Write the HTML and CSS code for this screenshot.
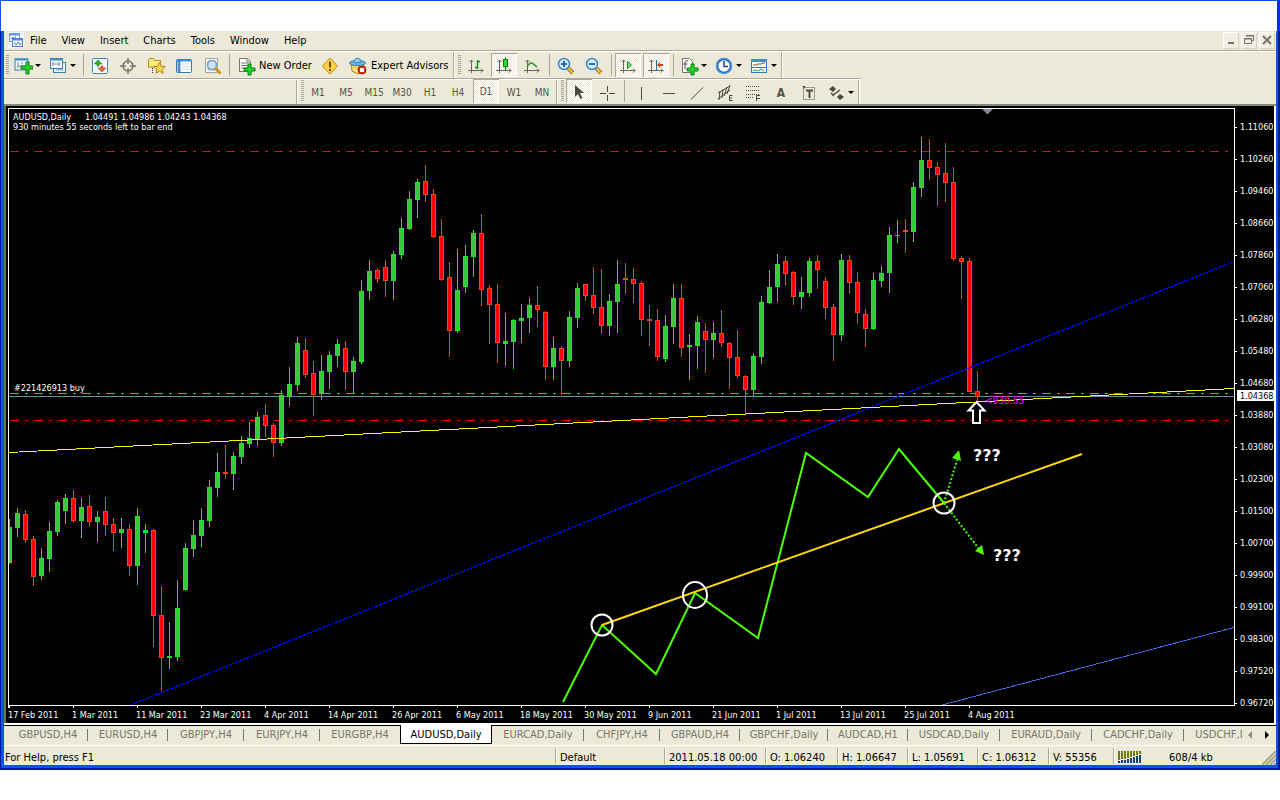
FILE: index.html
```html
<!DOCTYPE html>
<html lang="en">
<head>
<meta charset="utf-8">
<title>AUDUSD,Daily</title>
<link rel="stylesheet" href="styles.css">
</head>
<body>
<div class="caption"></div>
<div class="frame">
<div class="window">
  <nav class="menubar">
    <svg class="app-icon" width="16" height="16" viewBox="0 0 16 16"><rect width="16" height="16" fill="#f4f8ff"/><rect x="1.500" y="1.500" width="10" height="8" fill="#fff" stroke="#6a9ae8"/><path d="M1 2.500h11" stroke="#6a9ae8" stroke-width="2"/><path d="M3 7l2-2 1 2 2-3" fill="none" stroke="#4c84e0"/><rect x="4.500" y="6.500" width="10" height="8" fill="#fff" stroke="#4c84e0"/><path d="M4 7.500h11" stroke="#4c84e0" stroke-width="2"/><path d="M6 10l2 3 2-3 2 3 1-2" fill="none" stroke="#4c84e0"/></svg>
    <button>File</button><button>View</button><button>Insert</button><button>Charts</button><button>Tools</button><button>Window</button><button>Help</button>
    <div class="controls">
      <button aria-label="Minimize"><svg width="16" height="16"><path d="M5 11h6" stroke="#77756a" stroke-width="2"/></svg></button>
      <button aria-label="Restore"><svg width="16" height="16" fill="none" stroke="#77756a"><path d="M5.500 5V3.500h7v5H11M5 4h8"/><path d="M3.500 6.500h7v5h-7zM3 7h8"/></svg></button>
      <button aria-label="Close"><svg width="16" height="16"><path d="M4 4l8 8M12 4l-8 8" stroke="#77756a" stroke-width="2"/></svg></button>
    </div>
  </nav>

  <div class="toolbar main">
    <span class="grip"></span>
    <button class="drop" aria-label="New chart"><svg width="20" height="20"><rect x="2" y="3" width="13" height="11" fill="#eef5fb" stroke="#3f7dad" stroke-width="1"/><path d="M2 3.500h13" stroke="#3f8fd0" stroke-width="2"/><path d="M5 6v6M4 10h8M9 6v2" stroke="#7996b0"/><path d="M13 6h3v4h4v3h-4v5h-3v-5H8v-3h5z" fill="#23d62b" stroke="#087d12"/></svg></button>
    <button class="drop" aria-label="Profiles"><svg width="20" height="20"><rect x="5.500" y="6.500" width="12" height="10" fill="#eef5fb" stroke="#3f7dad"/><rect x="2.500" y="2.500" width="12" height="10" fill="#eef5fb" stroke="#3f7dad"/><path d="M2 3.500h13" stroke="#3f8fd0" stroke-width="2"/><path d="M5 6v4M4 8h8M11 6v4M8 14h7" stroke="#7996b0"/></svg></button>
    <span class="sep"></span>
    <button aria-label="Market Watch"><svg width="20" height="20"><rect x="2.500" y="2.500" width="15" height="15" rx="1" fill="#fff" stroke="#3d82b8"/><path d="M5 5h10M5 8h10M5 11h10M5 14h10" stroke="#d2dde8"/><path d="M8 4l4 4H9v2H7V8H4z" fill="#27b52b" stroke="#117418" stroke-width=".5"/><path d="M12 16l4-4h-3v-2h-2v2H8z" fill="#ef6235" stroke="#b53510" stroke-width=".5"/></svg></button>
    <button aria-label="Data Window"><svg width="20" height="20" fill="none" stroke="#77736c" stroke-width="1.500"><circle cx="10" cy="10" r="5"/><path d="M10 2v6M10 12v6M2 10h6M12 10h6"/></svg></button>
    <button aria-label="Navigator"><svg width="20" height="20"><path d="M2.500 11V3.500l1-1h4l1 2h6V11z" fill="#ffe97a" stroke="#b08b1e"/><path d="M6.500 12v6" stroke="#333" stroke-dasharray="1 1"/><path d="M13.500 6.500l1.700 3.700 4 .4-3 2.700.9 4-3.600-2.100-3.600 2.100.9-4-3-2.700 4-.4z" fill="#ffd54b" stroke="#b98212"/></svg></button>
    <button aria-label="Terminal"><svg width="20" height="20"><rect x="2.500" y="3.500" width="15" height="13" rx="1" fill="#fff" stroke="#2f78bd"/><path d="M3 4.500h14" stroke="#3f8fd8" stroke-width="2"/><path d="M5 5v11" stroke="#5d9ad0" stroke-width="3"/><path d="M5 5v11" stroke="#20558f" stroke-dasharray="1 2"/><path d="M8 8h8M8 10.500h8M8 13h8" stroke="#c9d9e8"/></svg></button>
    <button aria-label="Strategy Tester"><svg width="20" height="20"><path d="M3.500 2.500h12v14h-12z" fill="#f7f7f3" stroke="#a3a39b"/><path d="M5 6h9M5 12h9M7 4v11M12 4v11" stroke="#9aa"/><circle cx="10" cy="9" r="4.500" fill="#cfe6f8" stroke="#6f9dc4" stroke-width="1.500"/><path d="M13.500 12.500l5 5" stroke="#c99520" stroke-width="3"/></svg></button>
    <span class="sep"></span>
    <button class="label order"><svg width="20" height="20"><path d="M2.500 2.500h8l3 3v10h-11z" fill="#fff" stroke="#77756e"/><path d="M10 3v3h3M4 7h7M4 9.500h7M4 12h6" stroke="#77756e" fill="none"/><path d="M11 8h3v4h4v3h-4v4h-3v-4H7v-3h4z" fill="#23d62b" stroke="#087d12"/></svg>New Order</button>
    <button aria-label="Alerts"><svg width="20" height="20"><path d="M10 2l7.500 8-7.500 8-7.500-8z" fill="#ffd43e" stroke="#b98b13" stroke-linejoin="round"/><path d="M10 5.500v6M10 13v2" stroke="#6d4a05" stroke-width="2"/></svg></button>
    <button class="label expert"><svg width="20" height="20"><path d="M3 8h13l-1 7-5 3-6-3z" fill="#f6cf50" stroke="#b98b13"/><path d="M5 13l5 3" stroke="#fff3b0" stroke-width="2"/><ellipse cx="9.500" cy="7" rx="8" ry="2.500" fill="#6cb5e4" stroke="#2e7fb5"/><path d="M6 6c0-5 7-5 7 0-2 1-5 1-7 0z" fill="#8fcbf0" stroke="#2e7fb5"/><circle cx="14" cy="14" r="4" fill="#e02a12" stroke="#a71504"/><rect x="12" y="12" width="4" height="4" fill="#fff"/></svg>Expert Advisors</button>
    <span class="edge"></span><span class="grip"></span>
    <button aria-label="Bar Chart"><svg width="20" height="20" fill="none"><path d="M5.500 4v13M2 14.500h15M3.500 6l2-2 2 2M15 12.500l2 2-2 2" stroke="#66645e"/><path d="M11.500 4v9M9 11.500h3M11 5.500h3" stroke="#168a1d" stroke-width="1.500"/></svg></button>
    <button class="on" aria-label="Candlesticks"><svg width="20" height="20" fill="none"><path d="M5.500 4v13M2 14.500h15M3.500 6l2-2 2 2M15 12.500l2 2-2 2" stroke="#66645e"/><path d="M11.500 1v13" stroke="#087d12"/><rect x="9.500" y="3.500" width="4" height="7" fill="#2bd934" stroke="#087d12"/></svg></button>
    <button aria-label="Line Chart"><svg width="20" height="20" fill="none"><path d="M5.500 4v13M2 14.500h15M3.500 6l2-2 2 2M15 12.500l2 2-2 2" stroke="#66645e"/><path d="M5 11c4-7 6-3 10 0" stroke="#279a2c" stroke-width="1.500"/></svg></button>
    <span class="sep"></span>
    <button aria-label="Zoom In"><svg width="20" height="20"><path d="M12 12l5 5" stroke="#9b7618" stroke-width="4"/><path d="M12 12l5 5" stroke="#f2c746" stroke-width="2"/><circle cx="8" cy="8" r="5.500" fill="#d5edff" stroke="#3c88cc" stroke-width="1.500"/><path d="M5 8h6M8 5v6" stroke="#236ca5" stroke-width="2"/></svg></button>
    <button aria-label="Zoom Out"><svg width="20" height="20"><path d="M12 12l5 5" stroke="#9b7618" stroke-width="4"/><path d="M12 12l5 5" stroke="#f2c746" stroke-width="2"/><circle cx="8" cy="8" r="5.500" fill="#d5edff" stroke="#3c88cc" stroke-width="1.500"/><path d="M5 8h6" stroke="#236ca5" stroke-width="2"/></svg></button>
    <span class="sep"></span>
    <button class="on" aria-label="Auto Scroll"><svg width="20" height="20" fill="none"><path d="M5.500 4v13M2 14.500h15M3.500 6l2-2 2 2M15 12.500l2 2-2 2" stroke="#66645e"/><path d="M9.500 5.500v7l4-3.500z" fill="#5bea60" stroke="#168a1d"/></svg></button>
    <button class="on" aria-label="Chart Shift"><svg width="20" height="20" fill="none"><path d="M5.500 4v13M2 14.500h15M3.500 6l2-2 2 2M15 12.500l2 2-2 2" stroke="#66645e"/><path d="M10.500 4v10" stroke="#1d6d96"/><path d="M11 9l3-3v2h3v2h-3v2z" fill="#d63c12"/></svg></button>
    <span class="sep"></span>
    <button class="drop" aria-label="Indicators"><svg width="20" height="20"><path d="M3.500 2.500h7l3 3v11h-10z" fill="#fff" stroke="#77756e"/><path d="M9 5c-2-1-3 0-3 2v6M4.500 8h4" fill="none" stroke="#444"/><path d="M12 8h3v4h4v3h-4v4h-3v-4H8v-3h4z" fill="#23d62b" stroke="#087d12"/></svg></button>
    <button class="drop" aria-label="Periods"><svg width="20" height="20"><circle cx="10" cy="10" r="7" fill="#f3f8fc" stroke="#1a66ba" stroke-width="2.500"/><circle cx="10" cy="10" r="7.500" fill="none" stroke="#63aef0"/><path d="M10 5v5.500h4" stroke="#345" fill="none" stroke-width="1.500"/></svg></button>
    <button class="drop" aria-label="Templates"><svg width="20" height="20"><rect x="2.500" y="3.500" width="15" height="13" fill="#fff" stroke="#2f78bd"/><path d="M2 4.500h16" stroke="#3f8fd8" stroke-width="3"/><path d="M3 11.500h14" stroke="#3f7dad"/><path d="M4 9h3l2-1h3l2-1h2" fill="none" stroke="#a33318"/><path d="M4 15l3-1 2 1 3-2 3 2" fill="none" stroke="#2c9b31"/></svg></button>
    <span class="edge"></span>
  </div>

  <div class="toolbar periods">
    <div class="blank"></div>
    <span class="edge"></span><span class="grip"></span>
    <button>M1</button><button>M5</button><button>M15</button><button>M30</button><button>H1</button><button>H4</button><button class="on">D1</button><button>W1</button><button>MN</button>
    <span class="edge"></span><span class="grip"></span>
    <button class="on" aria-label="Cursor"><svg width="20" height="20"><path d="M6 3v12l3-3 2.500 5 2-1-2.500-5h4z" fill="#4a4842"/></svg></button>
    <button aria-label="Crosshair"><svg width="20" height="20" stroke="#4a4842"><path d="M10.500 3v6M10.500 12v6M3 10.500h6M12 10.500h6"/></svg></button>
    <span class="sep"></span>
    <button aria-label="Vertical Line"><svg width="20" height="20" stroke="#4a4842"><path d="M10.500 4v13"/></svg></button>
    <button aria-label="Horizontal Line"><svg width="20" height="20" stroke="#4a4842"><path d="M4 10.500h12"/></svg></button>
    <button aria-label="Trendline"><svg width="20" height="20" stroke="#4a4842"><path d="M4 16.500l12-12"/></svg></button>
    <button aria-label="Equidistant Channel"><svg width="20" height="20" stroke="#4a4842" fill="none"><path d="M3 10L15 3M3 16L15 7M5 8l-1 9M8 6L7 15M12 4l-3 9M15 2l-3 9"/><path d="M17.500 12.500h-3v5h3M15 15h2"/></svg></button>
    <button aria-label="Fibonacci"><svg width="20" height="20" stroke="#4a4842" fill="none"><path d="M3 3.500h14M3 7.500h14M3 11.500h14M3 14.500h8" stroke-dasharray="1 1"/><path d="M17 12.500h-3.500v5.500M14 15.500h3"/></svg></button>
    <button class="letter">A</button>
    <button class="letter" aria-label="Text Label"><svg width="20" height="20"><rect x="4.500" y="4.500" width="11" height="12" fill="none" stroke="#4a4842" stroke-dasharray="1 1"/><path d="M3 3h3v3z" fill="#4a4842"/><path d="M7 7.500h7M10.500 7v8" stroke="#4a4842" stroke-width="2"/></svg></button>
    <button class="drop" aria-label="Arrows"><svg width="20" height="20" fill="#4a4842"><path d="M7 3l3 3-3 3-4-3zM14 11l4 3-4 3-3-3z"/><path d="M7 12l7-5M5 10l3 3" stroke="#4a4842" stroke-width="1.500"/></svg></button>
    <span class="edge"></span>
  </div>

  <div class="chart-window">
    <svg class="chart" id="chart" viewBox="6 106 1268 617" role="img" aria-label="AUDUSD daily candlestick chart">
      <g id="dashes" class="crisp">
        <path class="dash sell" d="M10 151.500H1229"/>
        <path class="dash sell" d="M10 420.500H1229"/>
        <path class="dash buy" d="M10 393.500H1229"/>
        <path d="M9 396.500H1234" stroke="#778899"/>
      </g>
      <g id="candles" class="crisp"></g>
      <g class="crisp" fill="none">
        <path d="M129 705.500L1234 261.500" stroke="#0000ff"/>
        <path d="M940 705.500L1234 627.500" stroke="#4169e1"/>
        <path d="M9 452.500L1234 388.500" stroke="#ffff00"/>
        <path d="M8.500 708V108.500H1234.500V705.500H8" stroke="#fff"/>
      </g>
      <path d="M982 109h11l-5.500 5.500z" fill="#778899"/>
      <text class="timer" x="985" y="404">&lt;930:55</text>
      <path d="M976.500 402l8 8.500h-4.500v12.500h-7v-12.500h-4.500z" class="up-arrow"/>
      <g fill="none" stroke-width="2">
        <path d="M563 702L602 625L656 674L695 593L758 638L806 453L868 497L899 449L944 503" stroke="#4cff00"/>
        <path d="M602 625L1082 454" stroke="#ffd800"/>
        <path d="M944 503L957 460M944 503L979 549" stroke="#4cff00" stroke-dasharray="2 2"/>
        <circle cx="602" cy="625" r="10.500" stroke="#fff"/>
        <ellipse cx="695" cy="595" rx="12" ry="13" stroke="#fff"/>
        <circle cx="944" cy="503" r="10.500" stroke="#fff"/>
      </g>
      <path d="M959 450l-7 8 9 3zM984 555l-9-4 7-6z" fill="#4cff00"/>
      <text class="query" x="973" y="461">???</text>
      <text class="query" x="993" y="561">???</text>
      <text class="tiny" x="13" y="120">AUDUSD,Daily</text>
      <text class="tiny" x="85" y="120">1.04491 1.04986 1.04243 1.04368</text>
      <text class="tiny" x="13" y="130">930 minutes 55 seconds left to bar end</text>
      <text class="tiny" x="14" y="391">#221426913 buy</text>
      <g id="axes" class="axes"></g>
      <rect x="1237" y="390" width="37" height="11" fill="#fff"/>
      <text class="tiny current" x="1240" y="399">1.04368</text>
    </svg>
  </div>

  <div class="tabs">
    <div class="tab-list">
      <button class="w80">GBPUSD,H4</button><button class="w80">EURUSD,H4</button><button class="w76">GBPJPY,H4</button><button class="w76">EURJPY,H4</button><button class="w80 last">EURGBP,H4</button><button class="w92 active">AUDUSD,Daily</button><button class="w92">EURCAD,Daily</button><button class="w76">CHFJPY,H4</button><button class="w80">GBPAUD,H4</button><button class="w88">GBPCHF,Daily</button><button class="w80">AUDCAD,H1</button><button class="w92">USDCAD,Daily</button><button class="w92">EURAUD,Daily</button><button class="w92">CADCHF,Daily</button><button class="w92">USDCHF,Daily</button>
    </div>
    <button class="scroll" aria-label="Scroll tabs left"><svg width="5" height="8"><path d="M4 0v8L0 4z" fill="#8d8b80"/></svg></button>
    <button class="scroll" aria-label="Scroll tabs right"><svg width="5" height="8"><path d="M0 0v8l4-4z" fill="#000"/></svg></button>
  </div>

  <footer class="status">
    <span class="help">For Help, press F1</span><span>Default</span><span>2011.05.18 00:00</span><span>O: 1.06240</span><span>H: 1.06647</span><span>L: 1.05691</span><span>C: 1.06312</span><span>V: 55356</span>
    <span class="traffic"><svg class="crisp" width="24" height="13"><path d="M1 0v9M4 0v8M7 0v8M10 0v7M13 0v6M16 0v5M19 0v4M22 0v3" stroke="#6b7d08" stroke-width="2"/><path d="M1 10v2M4 9v3M7 9v3M10 8v4M13 7v5M16 6v6M19 5v7M22 4v8" stroke="#0c4668" stroke-width="2"/></svg>608/4 kb</span>
    <svg class="resize" width="14" height="14"><path d="M0 14L14 0M4 14L14 4M8 14L14 8M12 14l2-2" stroke="#aca899" stroke-width="2"/></svg>
  </footer>
</div>
</div>
<script src="chart.js"></script>
</body>
</html>
```

FILE: styles.css
```css
* { box-sizing: border-box; }

body {
  margin: 0;
  background: #fff;
  color: #000;
  font: 11px/14px "DejaVu Sans Condensed", "DejaVu Sans", sans-serif;
}

button {
  margin: 0;
  padding: 0;
  border: 0;
  background: none;
  color: inherit;
  font: inherit;
  white-space: nowrap;
}

svg { display: block; flex: none; }

.caption {
  height: 31px;
  border: solid #0a54e6;
  border-width: 1px 3px 0 1px;
  border-right-color: #0831d9;
}

.frame {
  border: solid #001a9c;
  border-width: 0 2px 2px 1px;
}

.window {
  border: solid #0a54e6;
  border-width: 0 2px 3px 3px;
  background: #ece9d8;
}

.menubar {
  display: flex;
  align-items: center;
  height: 21px;
  padding: 0 1px 2px 4px;
  border-bottom: 1px solid #fff;
  box-shadow: inset 0 -1px #aca899;
}

.menubar > button { padding: 1px 7px 0 8px; height: 18px; }
.app-icon { margin-right: -2px; }

.controls { display: flex; gap: 2px; margin-left: auto; }

.controls button {
  width: 16px;
  height: 17px;
  background: #f1efe4;
  box-shadow: inset 1px 1px #fff, inset -1px -1px #d8d4c2;
}

.toolbar {
  display: flex;
  align-items: stretch;
  height: 26px;
}

.periods {
  height: 28px;
  border-bottom: 2px solid #8a887b;
  background: linear-gradient(#aca899 1px, #fff 1px) no-repeat 0 0 / 857px 2px;
  color: #55534b;
  font-size: 10px;
}

.blank { width: 292px; }

.toolbar button {
  display: flex;
  align-items: center;
  justify-content: center;
  width: 28px;
  padding-top: 1px;
}

.toolbar button.drop {
  width: 35px;
  justify-content: flex-start;
  padding-left: 3px;
}

.drop::after {
  content: "";
  border: solid transparent;
  border-width: 3px 3px 0;
  border-top-color: #000;
  margin-left: 2px;
}

.toolbar button.label { justify-content: flex-start; gap: 2px; padding-left: 5px; }
.toolbar button.order { width: 84px; }
.toolbar button.expert { width: 109px; gap: 3px; padding-left: 4px; }
.toolbar button.letter { font-size: 12px; font-weight: bold; }

.toolbar button.on {
  width: 26px;
  margin: 1px;
  background: repeating-conic-gradient(#fff 0 25%, #ece9d8 0 50%) 0 0 / 2px 2px;
  box-shadow: inset 1px 1px #aca899, inset -1px -1px #fff;
}

.toolbar.periods > * { margin-top: 2px; }

.grip {
  width: 7px;
  margin: 3px 0;
  background: repeating-linear-gradient(#aca899 0 1px, transparent 1px 2px) no-repeat 3px 0 / 3px 100%;
}

.main > .grip:first-child { width: 6px; background-position-x: 2px; }
.blank + .edge + .grip { width: 6px; }

.sep {
  width: 6px;
  margin: 2px 0;
  background: linear-gradient(#aca899, #aca899) no-repeat 3px 0 / 1px 100%;
}

.edge { width: 2px; background: #aca899; border-right: 1px solid #fff; }

.chart-window {
  border: solid #716f64;
  border-width: 0 2px;
  border-right-color: #fff;
}

.chart { width: 100%; height: auto; background: #000; }
.crisp { shape-rendering: crispEdges; }
.dash { stroke-dasharray: 9 6 3 6; }
.sell { stroke: #ff0000; }
.buy { stroke: #32cd32; }
.bull { fill: #32cd32; stroke: #00ff00; }
.bear { fill: #ff0000; stroke: #ff4500; }
.tiny, .axes { fill: #fff; font-size: 9px; }
.axes path { stroke: #fff; }
.current { fill: #000; }
.timer { fill: #ff00ff; font-size: 10px; }
.up-arrow { fill: #000; stroke: #fff; stroke-width: 2; }
.query { fill: #fff; font: bold 16px "DejaVu Sans", sans-serif; }

.tabs {
  display: flex;
  height: 23px;
  padding-left: 4px;
  border-top: 2px solid #fff;
  border-bottom: 1px solid #fff;
  background: linear-gradient(#000, #000) no-repeat 0 0 / 100% 1px;
  color: #77756a;
}

.tab-list { display: flex; flex: 1; overflow: hidden; }

.tab-list button {
  display: flex;
  flex: none;
  justify-content: center;
  height: 19px;
  padding-top: 3px;
  background: linear-gradient(#77756a, #77756a) no-repeat 100% 4px / 1px 12px;
}

.tab-list .last { background: none; }
.w76 { width: 76px; }
.w80 { width: 80px; }
.w88 { width: 88px; }
.w92 { width: 92px; }

.tab-list .active {
  background: #fff;
  border: 1px solid #000;
  border-top: 0;
  color: #000;
}

.scroll { display: flex; align-items: center; justify-content: center; width: 17px; height: 19px; }

.status {
  position: relative;
  display: grid;
  grid-template-columns: 1fr 109px 101px 72px 70px 70px 71px 65px 163px;
  height: 19px;
  padding-top: 2px;
}

.status span {
  height: 16px;
  padding: 3px 0 0 4px;
  line-height: 13px;
  border-left: 1px solid #aca899;
  box-shadow: inset 1px 0 #fff;
  white-space: nowrap;
}

.status .help { border: 0; padding-left: 1px; box-shadow: none; }
.status .traffic { display: flex; gap: 27px; }
.resize { position: absolute; right: 0; bottom: 0; }
```

FILE: chart.js
```js
// One entry per daily bar: direction, high, body top, body bottom, low.
const bars = `
G519,527,563,564 G508,513,528,537 R510,514,540,543 R536,539,577,586 G548,558,576,580
G522,531,559,572 G500,502,532,536 G494,498,511,524 R490,498,521,523 G498,507,521,538
R495,506,522,527 G511,517,522,542 R497,511,525,536 R518,524,533,551 G518,529,533,548
R524,529,566,576 G508,516,566,585 G524,530,533,553 R529,530,616,647 R586,615,658,691
G622,656,658,669 G580,608,657,661 G543,548,590,591 G520,535,549,557 G508,520,536,547
G480,487,521,527 G453,472,488,497 R445,472,474,479 G452,456,474,490 G436,443,457,464
G422,438,444,448 G412,417,440,446 R404,415,426,437 R423,425,443,457 G390,395,443,446
G367,384,397,406 G337,343,385,391 R338,350,375,378 R361,373,395,416 G355,371,394,400
G351,355,372,389 G339,344,356,367 R341,348,372,390 G357,361,372,393 G280,291,362,364
G260,271,291,300 R268,270,279,283 R260,267,281,297 G251,254,281,300 G218,228,255,259
G191,199,229,230 G179,182,200,218 R165,181,195,202 R189,194,237,238 R219,236,280,281
R262,277,331,357 G249,290,331,333 G245,256,287,293 G230,233,257,277 R214,233,290,306
R285,288,305,344 R284,304,343,363 G313,341,344,366 G319,320,342,369 G304,318,321,343
G298,305,318,333 R286,305,310,327 R311,312,367,380 G337,348,367,380 R346,348,361,395
G311,317,361,367 G283,288,318,328 R284,284,296,301 R267,295,308,314 R269,307,326,334
G294,301,326,336 G260,284,302,333 R263,278,280,294 R268,279,284,303 R281,283,320,336
R305,319,321,346 R309,320,357,361 G315,326,359,362 G284,298,327,344 R284,298,348,357
G334,345,347,380 G316,322,346,369 R323,331,340,373 G322,333,340,358 R310,333,343,347
R342,343,358,389 R330,357,376,378 R375,376,390,414 G353,356,390,397 G296,302,357,364
G270,287,303,304 G254,264,287,302 R256,261,274,286 R271,272,297,305 G277,292,297,309
G258,261,293,297 R255,261,270,289 R277,281,308,319 R304,307,335,361 G254,260,335,341
R255,260,283,294 R272,282,313,324 R309,314,329,347 G273,280,329,330 G266,273,281,287
G227,235,273,293 G220,235,236,243 R219,230,232,253 G182,187,232,242 G137,160,188,197
R139,160,168,180 R162,167,175,206 R143,173,183,202 R167,182,259,261 R256,258,262,299
R258,261,392,392 R371,391,397,401`.trim().split(/\s+/);

document.getElementById('candles').innerHTML = bars.map((bar, i) => {
  const [high, top, bottom, low] = bar.slice(1).split(',').map(Number);
  const x = 9 + 8 * i;
  const left = Math.max(x - 2, 9);
  const height = Math.max(bottom - top - 1, 0);
  return `<g class="${bar[0] === 'G' ? 'bull' : 'bear'}"><path d="M${x + 0.5} ${high}V${low}"/>` +
    (bottom - top > 1
      ? `<rect x="${left + 0.5}" y="${top + 0.5}" width="${x + 2 - left}" height="${height}"/>`
      : `<path d="M${left} ${top + 0.5}h5"/>`) + '</g>';
}).join('');

const prices = ['1.11060', '1.10260', '1.09460', '1.08660', '1.07860', '1.07060', '1.06280',
  '1.05480', '1.04680', '1.03880', '1.03080', '1.02300', '1.01500', '1.00700', '0.99900',
  '0.99100', '0.98300', '0.97520', '0.96720'];
const dates = ['17 Feb', '1 Mar', '11 Mar', '23 Mar', '4 Apr', '14 Apr', '26 Apr', '6 May',
  '18 May', '30 May', '9 Jun', '21 Jun', '1 Jul', '13 Jul', '25 Jul', '4 Aug'];

document.getElementById('axes').innerHTML =
  prices.map((p, i) => `<path d="M1235 ${127.5 + 32 * i}h2"/><text x="1240" y="${130 + 32 * i}">${p}</text>`).join('') +
  dates.map((d, i) => `<path d="M${9.5 + 64 * i} 706v2"/><text x="${8 + 64 * i}" y="718">${d} 2011</text>`).join('');
```
